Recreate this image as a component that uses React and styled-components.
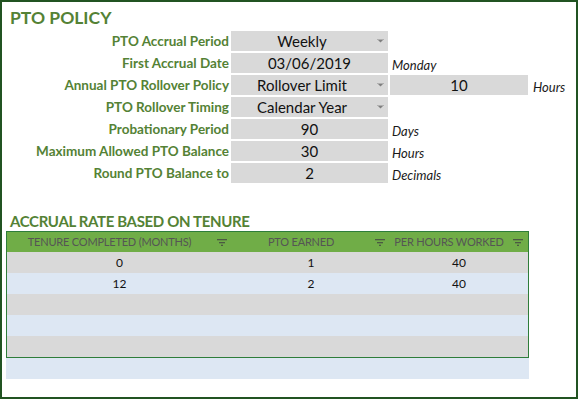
import React from "react";
import styled, { createGlobalStyle } from "styled-components";

const Global = createGlobalStyle`
  html, body { margin: 0; padding: 0; background: #fff; }
  body { font-family: Lato, "Open Sans", sans-serif; }
`;

const Frame = styled.div`
  box-sizing: border-box;
  width: 578px;
  height: 399px;
  border: 2px solid #215322;
  background: #fff;
  overflow: hidden;
`;

const Title = styled.h1`
  margin: ${(p) => p.$mt}px 0 0 8px;
  font-family: Lato, sans-serif;
  font-weight: 700;
  font-size: ${(p) => p.$size}px;
  line-height: ${(p) => p.$lh}px;
  color: #548235;
  letter-spacing: ${(p) => p.$ls || 0}px;
  white-space: nowrap;
`;

const Form = styled.div`
  margin-top: 2px;
  display: grid;
  grid-template-columns: 227px 157px 138px 1fr;
  grid-auto-rows: 20px;
  column-gap: 2px;
  row-gap: 2px;
`;

const Label = styled.div`
  grid-column: 1;
  text-align: right;
  font-size: 13.5px;
  font-weight: 700;
  line-height: 20px;
  color: #548235;
  white-space: nowrap;
`;

const Cell = styled.div`
  background: #d9d9d9;
  display: flex;
  align-items: center;
  font-size: 15px;
  line-height: 20px;
  color: #111;
  white-space: nowrap;
`;

const CellText = styled.span`
  flex: 1;
  text-align: center;
`;

const ArrowBox = styled.span`
  width: 15px;
  display: flex;
  justify-content: center;
  align-items: center;
`;

const Unit = styled.div`
  padding: 2px 0 0 ${(p) => p.$pl}px;
  font-size: 13px;
  font-style: italic;
  line-height: 20px;
  color: #1a1a1a;
  white-space: nowrap;
`;

const Table = styled.div`
  margin-left: 4px;
  width: 523px;
  box-sizing: border-box;
  border: 1px solid #2e7d3a;
`;

const Row = styled.div`
  display: grid;
  grid-template-columns: 225px 158px 138px;
  height: ${(p) => p.$h}px;
  background: ${(p) => p.$bg};
`;

const HeadCell = styled.div`
  display: flex;
  align-items: center;
  font-size: 11px;
  line-height: 20px;
  color: #555;
  letter-spacing: -0.2px;
  white-space: nowrap;
`;

const HeadText = styled.span`
  flex: 1;
  text-align: center;
`;

const BodyCell = styled.div`
  text-align: center;
  font-size: 12px;
  line-height: 21px;
  color: #111;
`;

const ExtraRow = styled.div`
  margin-left: 4px;
  width: 523px;
  height: 21px;
  background: #dde7f3;
`;

const Arrow = () => (
  <ArrowBox>
    <svg width="7" height="4" viewBox="0 0 7 4">
      <rect x="0" y="0" width="7" height="1" fill="#b0b0b0" />
      <polygon points="1,1 6,1 3.5,3.5" fill="#7f7f7f" />
    </svg>
  </ArrowBox>
);

const FilterIcon = () => (
  <svg width="10" height="7" viewBox="0 0 10 7" style={{ margin: "0 5px" }}>
    <rect x="0" y="0" width="10" height="1.3" fill="#4b5a43" />
    <rect x="2" y="3" width="6" height="1.3" fill="#4b5a43" />
    <rect x="4" y="5.7" width="2" height="1.3" fill="#4b5a43" />
  </svg>
);

const rows = [
  { label: "PTO Accrual Period", value: "Weekly", dd: true },
  { label: "First Accrual Date", value: "03/06/2019", unit: "Monday" },
  { label: "Annual PTO Rollover Policy", value: "Rollover Limit", dd: true, extra: "10", extraUnit: "Hours" },
  { label: "PTO Rollover Timing", value: "Calendar Year", dd: true },
  { label: "Probationary Period", value: "90", unit: "Days" },
  { label: "Maximum Allowed PTO Balance", value: "30", unit: "Hours" },
  { label: "Round PTO Balance to", value: "2", unit: "Decimals" },
];

const tableData = [
  ["0", "1", "40"],
  ["12", "2", "40"],
  ["", "", ""],
  ["", "", ""],
  ["", "", ""],
];

export default function App() {
  return (
    <>
      <Global />
      <Frame>
        <Title $mt={5} $size={17.5} $lh={22}>PTO POLICY</Title>
        <Form>
          {rows.map((r) => (
            <React.Fragment key={r.label}>
              <Label>{r.label}</Label>
              <Cell>
                <CellText>{r.value}</CellText>
                {r.dd && <Arrow />}
              </Cell>
              {r.extra ? (
                <>
                  <Cell>
                    <CellText>{r.extra}</CellText>
                  </Cell>
                  <Unit $pl={3}>{r.extraUnit}</Unit>
                </>
              ) : (
                <Unit $pl={2}>{r.unit || ""}</Unit>
              )}
            </React.Fragment>
          ))}
        </Form>
        <Title $mt={28} $size={15} $lh={20} $ls={-0.35}>ACCRUAL RATE BASED ON TENURE</Title>
        <Table>
          <Row $h={20} $bg="#70ad47">
            <HeadCell><HeadText>TENURE COMPLETED (MONTHS)</HeadText><FilterIcon /></HeadCell>
            <HeadCell><HeadText>PTO EARNED</HeadText><FilterIcon /></HeadCell>
            <HeadCell><HeadText>PER HOURS WORKED</HeadText><FilterIcon /></HeadCell>
          </Row>
          {tableData.map((d, i) => (
            <Row key={i} $h={21} $bg={i % 2 === 0 ? "#d9d9d9" : "#dde7f3"}>
              {d.map((v, j) => (
                <BodyCell key={j}>{v}</BodyCell>
              ))}
            </Row>
          ))}
        </Table>
        <ExtraRow />
      </Frame>
    </>
  );
}
